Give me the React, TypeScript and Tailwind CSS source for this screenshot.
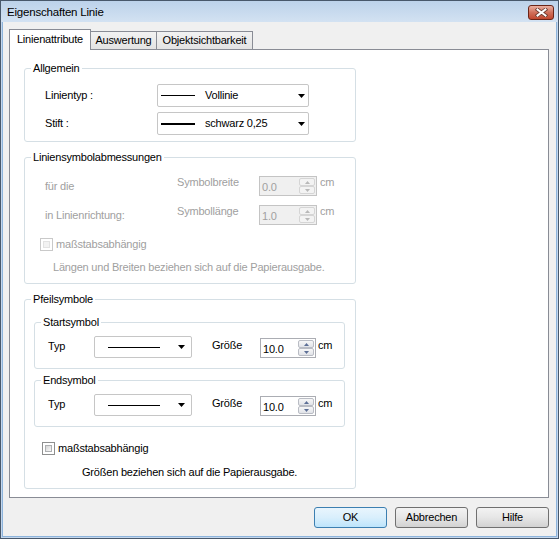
import clsx from 'clsx'

const dis = 'text-[#a0a0a0]'

function DownArrow() {
  return (
    <svg width="7" height="4" viewBox="0 0 7 4" className="shrink-0">
      <path d="M0 0h7L3.5 4z" fill="#000" />
    </svg>
  )
}

interface GroupProps {
  title: string
  className?: string
  children: React.ReactNode
}

function Group({ title, className, children }: GroupProps) {
  return (
    <fieldset className={clsx('rounded-[3px] border border-[#d5dfe5] p-0', className)}>
      <legend className="ml-[6px] px-[2px] leading-[13px]">{title}</legend>
      {children}
    </fieldset>
  )
}

interface ComboProps {
  text?: string
  thick?: boolean
  className: string
  lineClass: string
}

function Combo({ text, thick, className, lineClass }: ComboProps) {
  return (
    <div
      className={clsx(
        'flex items-center rounded-[2px] border border-[#c6c6c6] bg-white',
        className,
      )}
    >
      <div className={clsx('shrink-0 bg-black', thick ? 'h-[2px]' : 'h-px', lineClass)} />
      {text && <span className="ml-[10px] flex-1">{text}</span>}
      {!text && <span className="flex-1" />}
      <DownArrow />
    </div>
  )
}

function SpinBtn({ up, disabled }: { up?: boolean; disabled?: boolean }) {
  return (
    <div
      className={clsx(
        'flex h-[9px] items-center justify-center rounded-[2px] border',
        disabled
          ? 'border-[#d5d5d5] bg-[#f3f3f3]'
          : 'border-[#b9bcc4] bg-gradient-to-b from-[#f7f7f7] to-[#e1e3e8]',
      )}
    >
      <svg width="5" height="3" viewBox="0 0 5 3">
        <path
          d={up ? 'M0 3h5L2.5 0z' : 'M0 0h5L2.5 3z'}
          fill={disabled ? '#b8b8b8' : '#5d6f96'}
        />
      </svg>
    </div>
  )
}

function Spin({ value, disabled, className }: { value: string; disabled?: boolean; className?: string }) {
  return (
    <div
      className={clsx(
        'flex h-[20px] border',
        disabled ? 'border-[#c4c4c4] bg-[#f0f0f0]' : 'border-[#abadb3] bg-white',
        className,
      )}
    >
      <div className={clsx('flex-1 pl-[2px] pt-[4px]', disabled ? dis : 'text-black')}>{value}</div>
      <div className="flex w-[17px] flex-col py-px pr-px">
        <SpinBtn up disabled={disabled} />
        <SpinBtn disabled={disabled} />
      </div>
    </div>
  )
}

function Check({ disabled }: { disabled?: boolean }) {
  return (
    <div
      className={clsx(
        'h-[13px] w-[13px] shrink-0 border bg-white p-[2px]',
        disabled ? 'border-[#c9c9c9]' : 'border-[#8e8f8f]',
      )}
    >
      <div
        className={clsx(
          'h-full w-full border',
          disabled
            ? 'border-[#e2e2e2] bg-[#f2f2f2]'
            : 'border-[#aeb0b2] bg-gradient-to-br from-[#d5d5d5] to-[#f8f8f8]',
        )}
      />
    </div>
  )
}

function Button({ label, focused }: { label: string; focused?: boolean }) {
  return (
    <div
      className={clsx(
        'flex h-[21px] w-[73px] items-center justify-center rounded-[3px] border',
        focused
          ? 'border-[#3c7fb1] bg-gradient-to-b from-[#e9f5fd] via-[#d9effc] to-[#bde4fb]'
          : 'border-[#707070] bg-gradient-to-b from-[#f3f3f3] via-[#e6e6e6] to-[#d2d2d2]',
      )}
    >
      {label}
    </div>
  )
}

function CloseButton() {
  return (
    <div className="mt-px flex h-[15px] w-[26px] items-center justify-center rounded-[3px] border border-[#6b2518] bg-gradient-to-b from-[#eab0a2] via-[#d0705b] to-[#c1472e]">
      <svg width="13" height="9" viewBox="0 0 13 9">
        <path d="M2.5 1.5L10.5 7.5M10.5 1.5L2.5 7.5" stroke="#6a3a30" strokeWidth="3.6" strokeLinecap="square" />
        <path d="M2.5 1.5L10.5 7.5M10.5 1.5L2.5 7.5" stroke="#ffffff" strokeWidth="2" strokeLinecap="square" />
      </svg>
    </div>
  )
}

export default function App() {
  return (
    <div className="flex h-[539px] w-[559px] flex-col border border-[#48586b] bg-[#c4d7ed] font-['Liberation_Sans',Arial,sans-serif] text-[11px] leading-[13px] tracking-[-0.2px] text-black">
      {/* title bar */}
      <div className="flex h-[21px] shrink-0 items-center bg-gradient-to-b from-[#bcd2ea] to-[#d3e2f2] pl-[6px] pr-[4px]">
        <span className="flex-1 pt-[2px] text-[11.5px]">Eigenschaften Linie</span>
        <CloseButton />
      </div>

      {/* client */}
      <div className="mx-px mb-px flex flex-1 flex-col border-x border-b border-[#8db4dc] bg-[#f0f0f0] pl-[6px] pr-[7px] pt-[7px]">
        <div className="flex h-[20px] items-end">
          <div className="relative z-10 -mb-px flex h-[21px] w-[82px] items-center justify-center border border-b-0 border-[#898c95] bg-white pb-[2px]">
            Linienattribute
          </div>
          <div className="flex h-[18px] w-[66px] items-center justify-center border border-b-0 border-l-0 border-[#898c95] bg-gradient-to-b from-[#f2f2f2] to-[#e3e3e3]">
            Auswertung
          </div>
          <div className="flex h-[18px] w-[96px] items-center justify-center border border-b-0 border-l-0 border-[#898c95] bg-gradient-to-b from-[#f2f2f2] to-[#e3e3e3]">
            Objektsichtbarkeit
          </div>
        </div>

        <div className="flex h-[449px] w-[540px] shrink-0 flex-col border border-[#898c95] bg-white pl-[14px] pt-[12px]">
          <Group title="Allgemein" className="w-[332px]">
            <div className="flex flex-col gap-[5px] pb-[6px] pl-[20px] pt-[9px]">
              <div className="flex items-center">
                <span className="w-[112px]">Linientyp :</span>
                <Combo text="Vollinie" className="h-[23px] w-[152px] pl-[3px] pr-[3px]" lineClass="w-[34px]" />
              </div>
              <div className="flex items-center">
                <span className="w-[112px]">Stift :</span>
                <Combo text="schwarz 0,25" thick className="h-[23px] w-[152px] pl-[3px] pr-[3px]" lineClass="w-[34px]" />
              </div>
            </div>
          </Group>

          <Group title="Liniensymbolabmessungen" className="mt-[9px] w-[332px]">
            <div className="flex flex-col pb-[9px] pt-[12px]">
              <div className="flex h-[20px] pl-[20px]">
                <span className={clsx('w-[132px] pt-[4px]', dis)}>für die</span>
                <span className={clsx('w-[82px]', dis)}>Symbolbreite</span>
                <Spin value="0.0" disabled className="w-[58px]" />
                <span className={clsx('ml-[3px]', dis)}>cm</span>
              </div>
              <div className="mt-[9px] flex h-[20px] pl-[20px]">
                <span className={clsx('w-[132px] pt-[4px]', dis)}>in Linienrichtung:</span>
                <span className={clsx('w-[82px]', dis)}>Symbollänge</span>
                <Spin value="1.0" disabled className="w-[58px]" />
                <span className={clsx('ml-[3px]', dis)}>cm</span>
              </div>
              <div className="mt-[13px] flex h-[13px] items-center gap-[3px] pl-[15px]">
                <Check disabled />
                <span className={dis}>maßstabsabhängig</span>
              </div>
              <div className={clsx('mt-[10px] pl-[28px]', dis)}>
                Längen und Breiten beziehen sich auf die Papierausgabe.
              </div>
            </div>
          </Group>

          <Group title="Pfeilsymbole" className="mt-[9px] w-[332px]">
            <div className="flex flex-col pb-[9px]">
              <Group title="Startsymbol" className="ml-[9px] mt-[10px] w-[311px]">
                <div className="flex h-[22px] pl-[13px]" style={{ marginTop: 7, marginBottom: 10 }}>
                  <span className="w-[46px] pt-[4px]">Typ</span>
                  <Combo className="h-[22px] w-[98px] pl-[13px] pr-[6px]" lineClass="w-[52px]" />
                  <span className="ml-[20px] w-[48px] pt-[3px]">Größe</span>
                  <Spin value="10.0" className="mt-[2px] w-[56px]" />
                  <span className="ml-[2px] pt-[3px]">cm</span>
                </div>
              </Group>
              <Group title="Endsymbol" className="ml-[9px] mt-[5px] w-[311px]">
                <div className="flex h-[22px] pl-[13px]" style={{ marginTop: 7, marginBottom: 10 }}>
                  <span className="w-[46px] pt-[4px]">Typ</span>
                  <Combo className="h-[22px] w-[98px] pl-[13px] pr-[6px]" lineClass="w-[52px]" />
                  <span className="ml-[20px] w-[48px] pt-[3px]">Größe</span>
                  <Spin value="10.0" className="mt-[2px] w-[56px]" />
                  <span className="ml-[2px] pt-[3px]">cm</span>
                </div>
              </Group>
              <div className="mt-[15px] flex h-[13px] items-center gap-[3px] pl-[17px]">
                <Check />
                <span>maßstabsabhängig</span>
              </div>
              <div className="mt-[11px] pl-[57px]">Größen beziehen sich auf die Papierausgabe.</div>
            </div>
          </Group>
        </div>

        <div className="mt-[9px] flex justify-end gap-[8px]">
          <Button label="OK" focused />
          <Button label="Abbrechen" />
          <Button label="Hilfe" />
        </div>
      </div>
    </div>
  )
}
